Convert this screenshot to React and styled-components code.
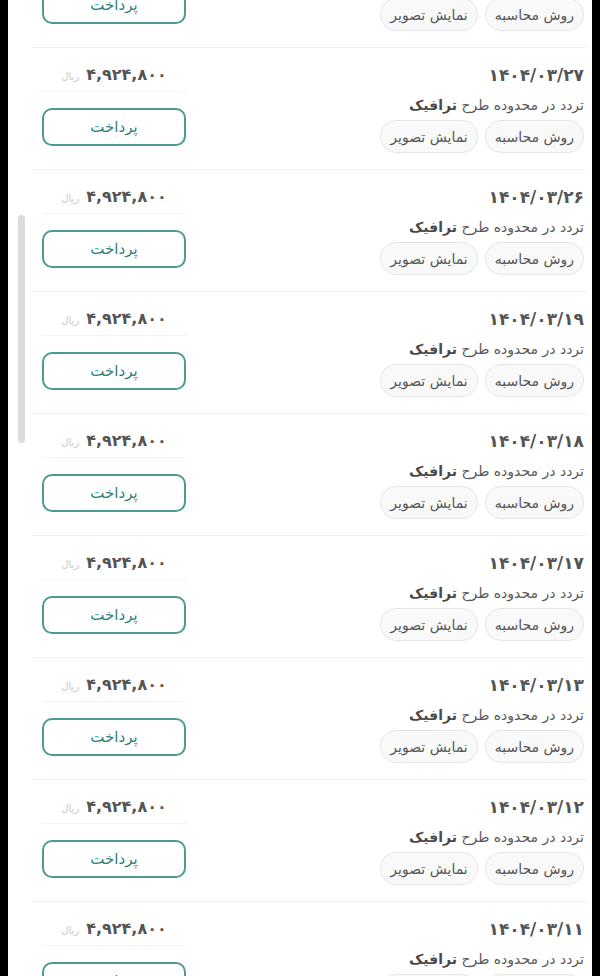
import React from "react";
import styled, { createGlobalStyle } from "styled-components";

const items = [
  { date: "۱۴۰۴/۰۳/۲۸" },
  { date: "۱۴۰۴/۰۳/۲۷" },
  { date: "۱۴۰۴/۰۳/۲۶" },
  { date: "۱۴۰۴/۰۳/۱۹" },
  { date: "۱۴۰۴/۰۳/۱۸" },
  { date: "۱۴۰۴/۰۳/۱۷" },
  { date: "۱۴۰۴/۰۳/۱۳" },
  { date: "۱۴۰۴/۰۳/۱۲" },
  { date: "۱۴۰۴/۰۳/۱۱" },
];

const App = () => {
  return (
    <Wrapper>
      <GlobalStyle />
      <Screen>
        <Scrollbar />
        <List>
          {items.map((item, i) => (
            <Row key={i}>
              <Info>
                <DateText>{item.date}</DateText>
                <Subtitle>
                  تردد در محدوده طرح <b>ترافیک</b>
                </Subtitle>
                <Chips>
                  <Chip>روش محاسبه</Chip>
                  <Chip>نمایش تصویر</Chip>
                </Chips>
              </Info>
              <PayColumn>
                <Amount>
                  <Price>۴,۹۲۴,۸۰۰</Price>
                  <Currency>ریال</Currency>
                </Amount>
                <PayButton>پرداخت</PayButton>
              </PayColumn>
            </Row>
          ))}
        </List>
      </Screen>
    </Wrapper>
  );
};

export default App;

const GlobalStyle = createGlobalStyle`
  html, body {
    margin: 0;
    padding: 0;
    background: #000;
    overflow: hidden;
  }
  * {
    box-sizing: border-box;
  }
`;

const Wrapper = styled.div`
  height: 976px;
  padding: 0 8px;
  background: #000;
  overflow: hidden;
`;

const Screen = styled.div`
  position: relative;
  height: 100%;
  background: #fff;
  overflow: hidden;
  font-family: "DejaVu Sans", "Noto Sans", sans-serif;
  color: #555;
`;

const Scrollbar = styled.div`
  position: absolute;
  left: 10px;
  top: 215px;
  width: 7px;
  height: 228px;
  border-radius: 4px;
  background: #dcdcdc;
`;

const List = styled.div`
  direction: rtl;
  margin-top: -74px;
  padding: 0 5px 0 0;
  margin-left: 24px;
`;

const Row = styled.div`
  display: flex;
  justify-content: space-between;
  height: 122px;
  padding: 14px 3px 0 10px;
  border-bottom: 1px solid #f0f0f0;
`;

const Info = styled.div`
  display: flex;
  flex-direction: column;
  align-items: flex-start;
`;

const DateText = styled.div`
  font-size: 17px;
  font-weight: 700;
  line-height: 26px;
  color: #555;
`;

const Subtitle = styled.div`
  margin-top: 4px;
  font-size: 14px;
  line-height: 26px;
  color: #595959;

  b {
    font-weight: 700;
    color: #4a4a4a;
  }
`;

const Chips = styled.div`
  display: flex;
  gap: 7px;
  margin-top: 2px;
`;

const Chip = styled.div`
  height: 33px;
  padding: 0 9px;
  display: flex;
  align-items: center;
  border: 1px solid #e6e6e6;
  border-radius: 16px;
  background: #f9f9f9;
  font-size: 14px;
  color: #555;
`;

const PayColumn = styled.div`
  width: 144px;
  display: flex;
  flex-direction: column;
`;

const Amount = styled.div`
  display: flex;
  justify-content: center;
  align-items: baseline;
  gap: 7px;
  height: 30px;
  border-bottom: 1px solid #f3f3f3;
`;

const Price = styled.span`
  font-size: 16px;
  font-weight: 700;
  color: #555;
  line-height: 26px;
`;

const Currency = styled.span`
  font-size: 10px;
  color: #c8c8c8;
`;

const PayButton = styled.button`
  margin-top: 16px;
  height: 38px;
  width: 100%;
  border: 2px solid #4d9a90;
  border-radius: 10px;
  background: #fff;
  color: #2f7f74;
  font-family: inherit;
  font-size: 15px;
  cursor: pointer;
`;
